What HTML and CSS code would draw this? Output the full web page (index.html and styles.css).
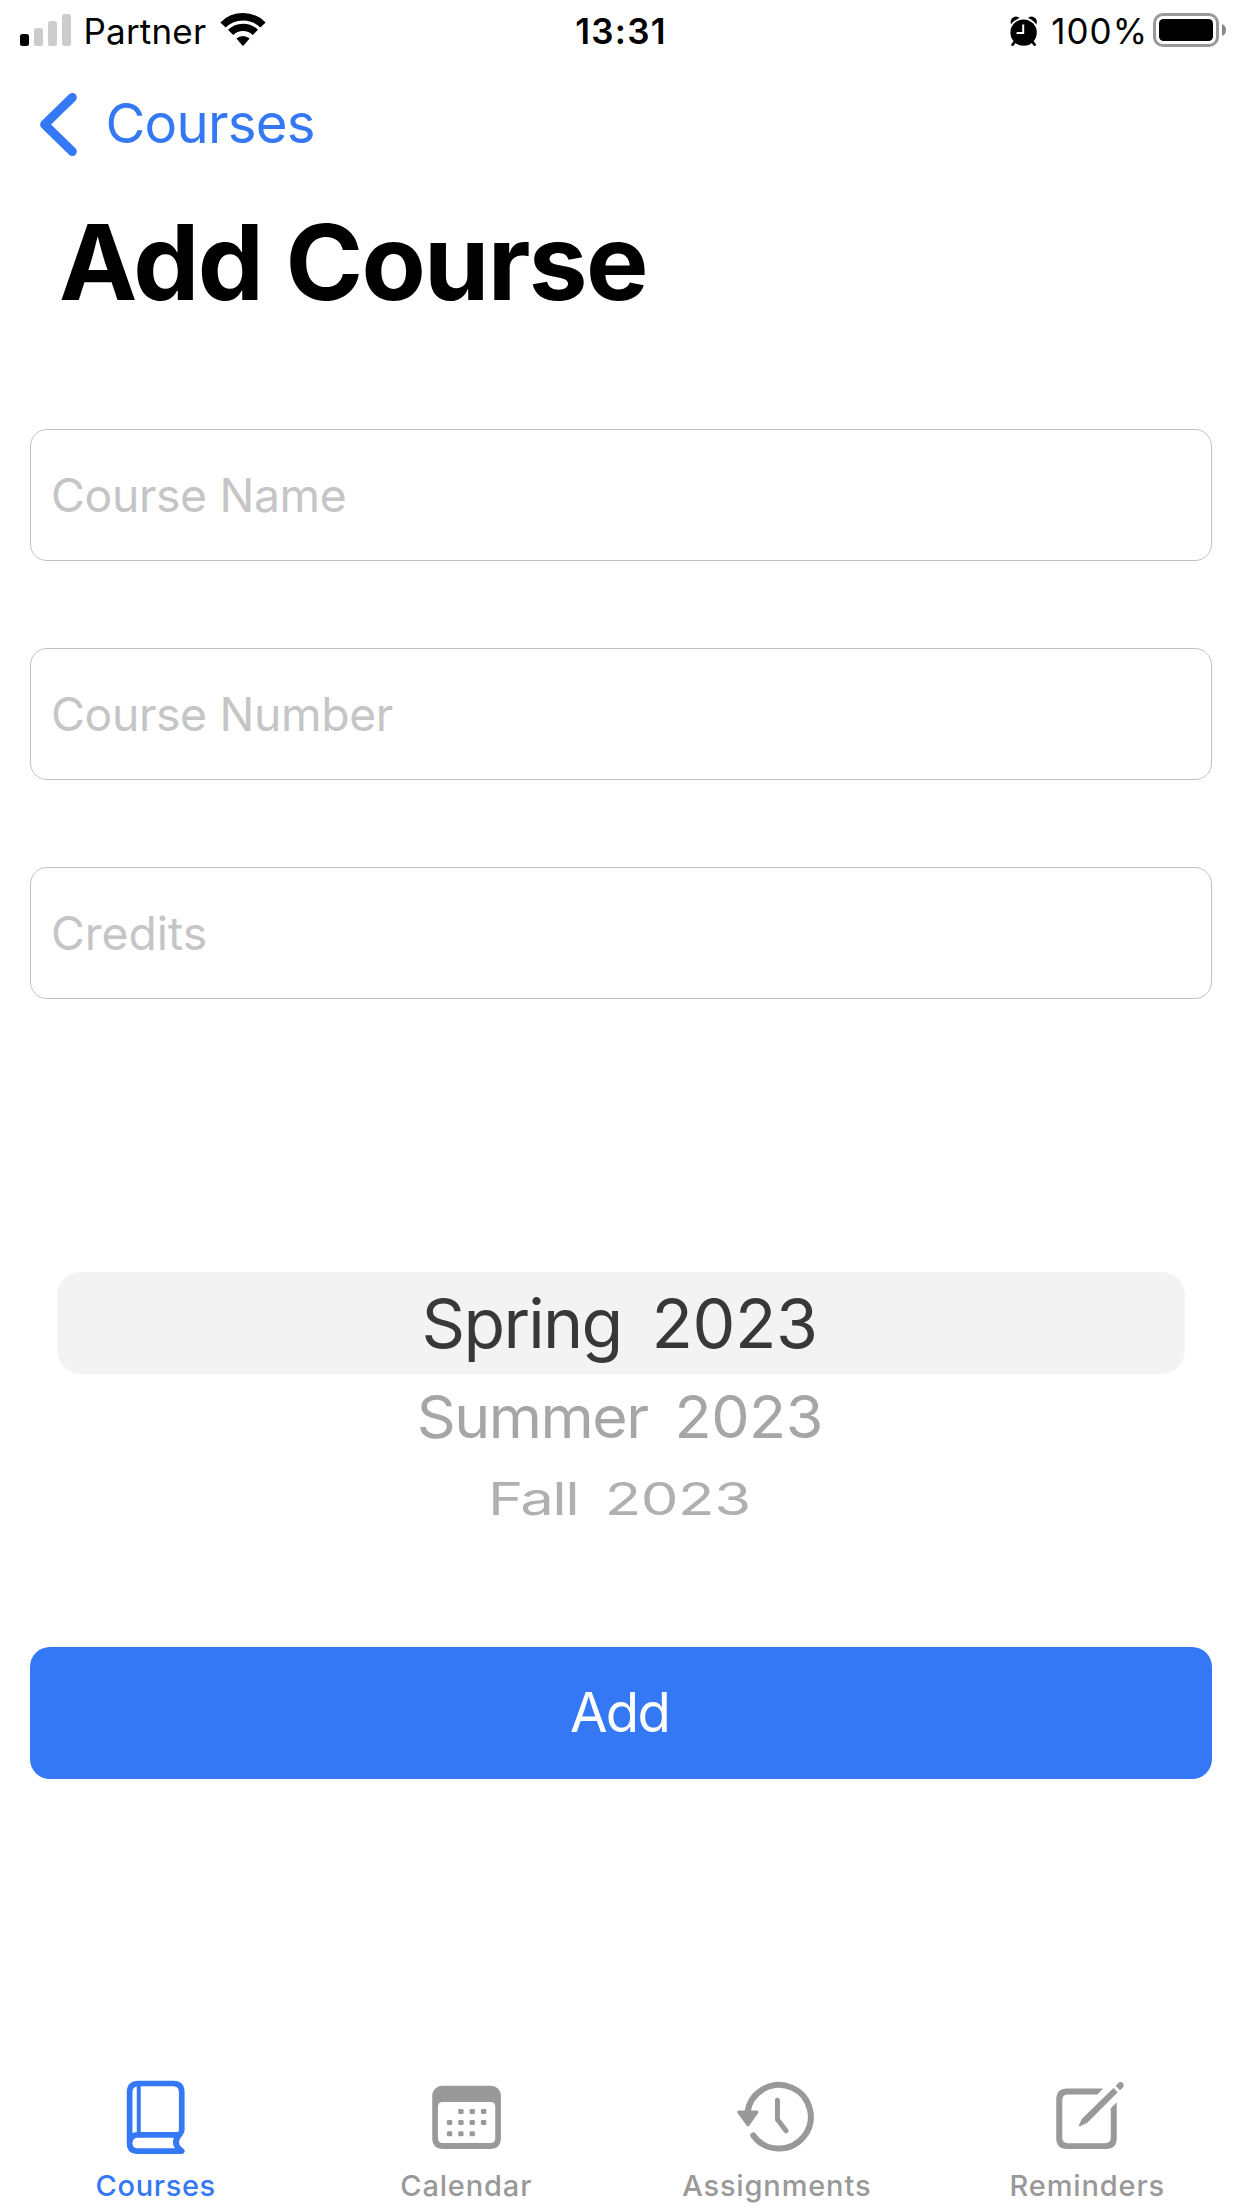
FILE: index.html
```
<!DOCTYPE html>
<html lang="en">
<head>
<meta charset="utf-8">
<title>Add Course</title>
<link rel="stylesheet" href="styles.css">
</head>
<body>
<div class="status">
  <div class="status-left">
    <svg class="signal" width="51" height="32" viewBox="0 0 51 32" fill="#ccc">
      <rect x="0" y="20" width="9" height="12" rx="2.5" fill="#000"/>
      <rect x="14" y="14" width="9" height="18" rx="2.5"/>
      <rect x="28" y="7" width="9" height="25" rx="2.5"/>
      <rect x="42" y="0" width="9" height="32" rx="2.5"/>
    </svg>
    <span class="carrier">Partner</span>
    <svg class="wifi" width="46" height="33" viewBox="-23 -32 46 33" fill="none" stroke="#000" stroke-width="7.4">
      <path d="M-20-20A28.3 28.3 0 0 1 20-20"/>
      <path d="M-12.4-12.6A17.7 17.7 0 0 1 12.4-12.6"/>
      <path d="M-6.6-6.4A9.4 9.4 0 0 1 6.6-6.4L.6.4Q0 1-.6.4Z" fill="#000" stroke="none"/>
    </svg>
  </div>
  <span class="time">13:31</span>
  <div class="status-right">
    <svg width="28" height="31" viewBox="0 0 28 31">
      <circle cx="6" cy="6" r="5.4"/><circle cx="21.5" cy="6" r="5.4"/>
      <path d="M5 25.5L2.6 28.6M22.2 25.5l2.4 3.1" stroke="#000" stroke-width="2.6" stroke-linecap="round"/>
      <circle cx="13.6" cy="16.6" r="15" fill="#fff" clip-path="inset(0 0 12px 0)"/>
      <circle cx="13.6" cy="16.6" r="13.2"/>
      <path d="M13.2 8.5v8.6H6.6" fill="none" stroke="#fff" stroke-width="2"/>
    </svg>
    <span class="percent">100%</span>
    <svg class="battery" width="74" height="34" viewBox="0 0 74 34">
      <rect x="1.5" y="1.5" width="63" height="31" rx="8.5" fill="none" stroke="#999" stroke-width="3"/>
      <rect x="6" y="6" width="54" height="22" rx="4.5"/>
      <path d="M69 11q4 1.500 4 6t-4 6z" fill="#888"/>
    </svg>
  </div>
</div>
<nav class="back">
  <svg width="37" height="63" viewBox="0 0 37 63" fill="none" stroke="#3478f6" stroke-width="9" stroke-linecap="round" stroke-linejoin="round"><path d="M32.300 4.500L4.600 31.500L32.300 58.500"/></svg>
  <span>Courses</span>
</nav>
<h1 class="title">Add Course</h1>
<form class="form">
  <input class="field" placeholder="Course Name">
  <input class="field" placeholder="Course Number">
  <input class="field credits" placeholder="Credits">
  <div class="picker">
    <div class="row selected"><span>Spring&nbsp; <span class="year">2023</span></span></div>
    <div class="row next"><span>Summer&nbsp; <span class="year">2023</span></span></div>
    <div class="row far"><span>Fall&nbsp; <span class="year">2023</span></span></div>
  </div>
  <button class="add" type="button">Add</button>
</form>
<nav class="tabs">
  <a class="tab active">
    <svg width="80" height="84" viewBox="105.75 48 240 252" fill="none" stroke="currentColor" stroke-width="17" stroke-linecap="round" stroke-linejoin="round">
      <path d="M149.500 250V97Q149.500 70.500 176 70.500H281Q306 70.500 306 97V211Q306 217 299 224Q278 248 299 267L306 273.500H174Q149.500 273.500 149.500 250Q149.500 224.500 175 224.500H298"/>
      <path d="M177 72V222" stroke-width="12" stroke-linecap="butt"/>
    </svg>
    <span>Courses</span>
  </a>
  <a class="tab">
    <svg width="80" height="84" viewBox="1037.25 48 240 252" fill="currentColor">
      <rect x="1056" y="77.500" width="206" height="189.500" rx="29"/>
      <rect x="1073" y="126" width="172" height="123" rx="13" fill="#fff"/>
      <g><rect x="1134" y="147" width="16" height="15" rx="4"/><rect x="1168" y="147" width="16" height="15" rx="4"/><rect x="1202" y="147" width="16" height="15" rx="4"/>
      <rect x="1100" y="180" width="16" height="15" rx="4"/><rect x="1134" y="180" width="16" height="15" rx="4"/><rect x="1168" y="180" width="16" height="15" rx="4"/><rect x="1202" y="180" width="16" height="15" rx="4"/>
      <rect x="1100" y="214" width="16" height="15" rx="4"/><rect x="1134" y="214" width="16" height="15" rx="4"/><rect x="1168" y="214" width="16" height="15" rx="4"/></g>
    </svg>
    <span>Calendar</span>
  </a>
  <a class="tab">
    <svg width="80" height="84" viewBox="76.25 16 80 84" fill="none" stroke="currentColor" stroke-linecap="round" stroke-linejoin="round">
      <path d="M87.800 52A31.800 31.800 0 1 1 93.500 75.400" stroke-width="6"/>
      <path d="M117.700 40.200V59.500L126.300 70.700" stroke-width="5"/>
      <path d="M79.300 52.200H96.900L88.200 64.500Z" fill="currentColor" stroke-width="3.500"/>
    </svg>
    <span>Assignments</span>
  </a>
  <a class="tab">
    <svg width="80" height="84" viewBox="386.75 16 80 84" fill="currentColor">
      <path d="M442.900 28.400H407Q396 28.400 396 39.400V78Q396 89 407 89H445.500Q456.500 89 456.500 78V42.200L450.500 48.300V77.500Q450.500 83.200 444.800 83.200H407.700Q402 83.200 402 77.500V40.200Q402 34.500 407.700 34.500H437Z"/>
      <path d="M453.200 28L457.500 32.300L427.300 62.500L419.900 66.200Q418 66.700 418.600 65L422 58.500Z"/>
      <path d="M455.400 25.900L458 23Q460.300 21 462.500 23.100Q464.600 25.300 462.400 27.700L459.800 30.200Z"/>
    </svg>
    <span>Reminders</span>
  </a>
</nav>
</body>
</html>
```
FILE: styles.css
```
* { box-sizing: border-box; }
body {
  margin: 0;
  height: 2208px;
  display: flex;
  flex-direction: column;
  background: #fff;
  color: #000;
  font-family: Inter, "Liberation Sans", sans-serif;
}
svg { display: block; flex: none; overflow: visible; }

.status {
  height: 62px;
  padding: 0 15px 0 20px;
  display: grid;
  grid-template-columns: 1fr auto 1fr;
  align-items: center;
  font-size: 35px;
  line-height: 62px;
}
.status-left, .status-right { display: flex; align-items: center; height: 62px; }
.status-right { justify-content: flex-end; }
.signal { margin: 0 12.5px 2px 0; }
.carrier { letter-spacing: .2px; margin-right: 14px; }
.wifi { margin-bottom: 3px; }
.time { font-weight: 600; letter-spacing: 1.2px; padding-right: 5px; }
.percent { letter-spacing: 1px; margin: 0 5px 0 13px; }
.battery { margin-bottom: 2px; }

.back {
  height: 125px;
  padding-left: 40px;
  display: flex;
  align-items: center;
  gap: 28.5px;
  color: #3478f6;
  font-size: 54.5px;
  letter-spacing: -.75px;
}
.back span { padding-bottom: 3px; }
.title {
  margin: 0;
  padding-left: 59px;
  height: 150px;
  line-height: 150px;
  font-size: 105px;
  font-weight: 700;
  letter-spacing: -1.7px;
}

.form {
  padding: 92px 30px 0;
  display: flex;
  flex-direction: column;
}
.field {
  width: 100%;
  height: 132px;
  margin: 0 0 87px;
  padding: 0 20px;
  border: 1px solid #c2c2c4;
  border-radius: 17px;
  background: #fff;
  font: 46.3px Inter, "Liberation Sans", sans-serif;
  letter-spacing: -.35px;
  outline: 0;
}
.field::placeholder { color: #c5c5c7; opacity: 1; }
.credits { letter-spacing: 0; margin-bottom: 273px; }

.picker {
  height: 375px;
  padding: 0 27px;
  font-size: 68px;
  letter-spacing: -1.75px;
  word-spacing: -2.3px;
}
.year { letter-spacing: -.5px; }
.row { display: flex; align-items: center; justify-content: center; padding-right: 3px; }
.selected { height: 102px; border-radius: 24px; background: #f3f3f3; color: #383838; }
.next { height: 86px; color: #a6a6a6; }
.next > span { transform: scale(.895, .86); }
.far { height: 77px; color: #b0b0b0; }
.far > span { transform: scale(.88, .657); }

.add {
  height: 132px;
  padding: 0 3px 2px 0;
  border: 0;
  border-radius: 20px;
  background: #3478f6;
  color: #fff;
  font: 54.5px Inter, "Liberation Sans", sans-serif;
  letter-spacing: -1.7px;
}

.tabs {
  margin-top: auto;
  height: 132px;
  display: grid;
  grid-template-columns: repeat(4, 1fr);
  color: #999;
}
.tab {
  display: flex;
  flex-direction: column;
  align-items: center;
  font-size: 29px;
  font-weight: 500;
  line-height: 36px;
  letter-spacing: .85px;
}
.tab span { margin-top: 7.5px; padding-left: 1px; }
.active { color: #3478f6; letter-spacing: .65px; }
```
